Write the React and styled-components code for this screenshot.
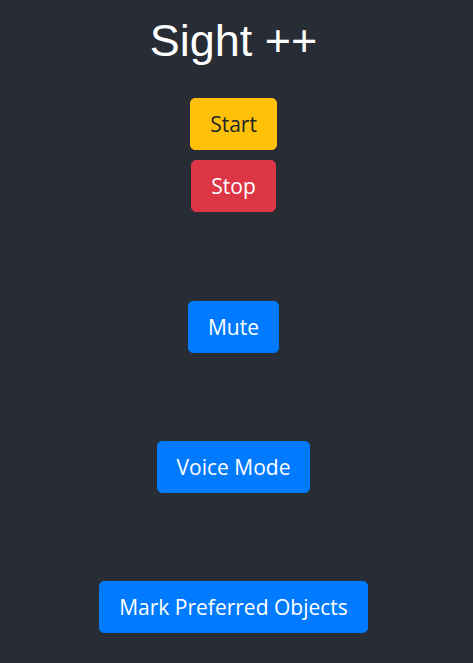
import styled, { createGlobalStyle } from "styled-components";

const GlobalStyle = createGlobalStyle`
    html, body {
        margin: 0;
        padding: 0;
        background-color: #282c34;
    }
`;

export default function App(){
    return(
        <>
            <GlobalStyle/>
            <PageStyle>
                <TitleStyle>Sight ++</TitleStyle>
                <ControlGroupStyle>
                    <ButtonStyle variant="warning">Start</ButtonStyle>
                    <ButtonStyle variant="danger">Stop</ButtonStyle>
                </ControlGroupStyle>
                <ButtonStyle variant="primary">Mute</ButtonStyle>
                <ButtonStyle variant="primary">Voice Mode</ButtonStyle>
                <ButtonStyle variant="primary">Mark Preferred Objects</ButtonStyle>
            </PageStyle>
        </>
    );
}

const colors = {
    warning: { bg: "#ffc107", fg: "#212529" },
    danger: { bg: "#dc3545", fg: "#ffffff" },
    primary: { bg: "#007bff", fg: "#ffffff" },
};

const PageStyle = styled.div`
    min-height: 663px;
    display: flex;
    flex-direction: column;
    align-items: center;
    gap: 88px;
    padding: 16px 6px 0 0;
    box-sizing: border-box;
`;

const TitleStyle = styled.h1`
    margin: 0 0 -56px 0;
    font-family: 'Liberation Sans', Arial, sans-serif;
    font-size: 45px;
    font-weight: 400;
    line-height: 50px;
    color: #FFF;
`;

const ControlGroupStyle = styled.div`
    display: flex;
    flex-direction: column;
    align-items: center;
    gap: 10px;
    margin-bottom: 1px;
`;

const ButtonStyle = styled.button`
    height: 52px;
    padding: 0 19px;
    border: 1px solid ${({ variant }) => colors[variant].bg};
    border-radius: 5px;
    background-color: ${({ variant }) => colors[variant].bg};
    color: ${({ variant }) => colors[variant].fg};
    font-family: 'Open Sans', 'Noto Sans', sans-serif;
    font-size: 21px;
    font-weight: 400;
    line-height: 30px;
    cursor: pointer;
`;
